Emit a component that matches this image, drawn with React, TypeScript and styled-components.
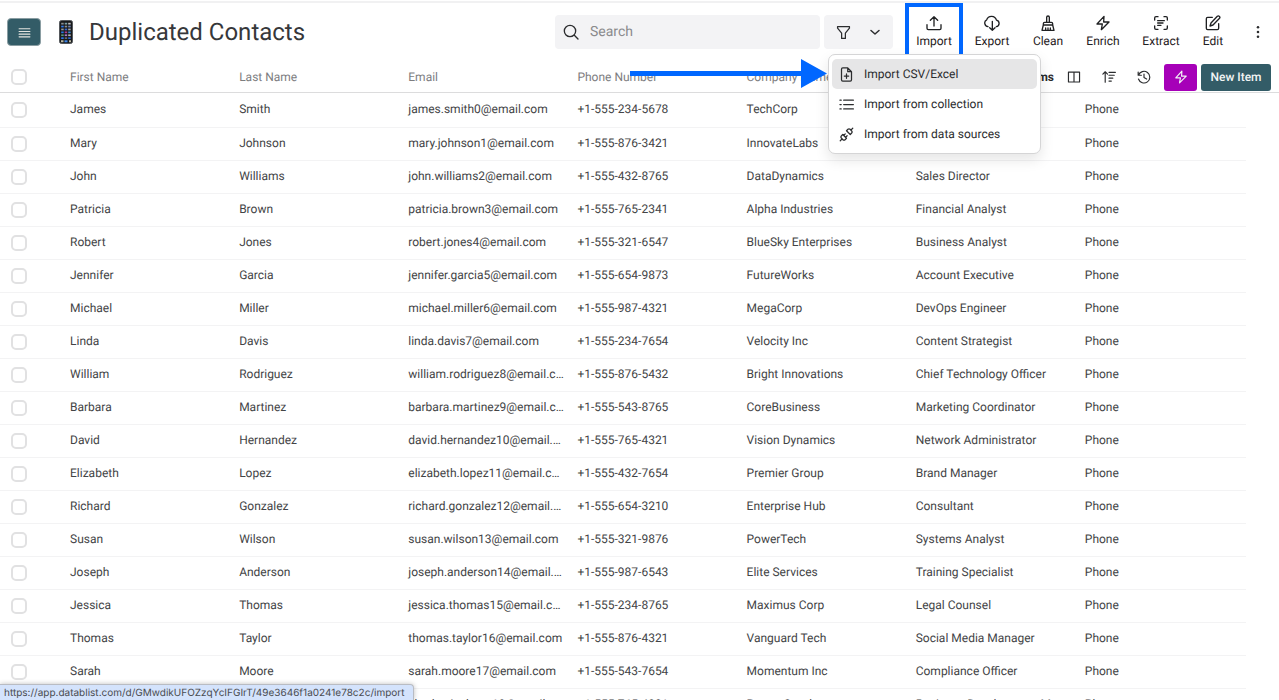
import React from "react";
import styled, { createGlobalStyle, css } from "styled-components";

const GlobalStyle = createGlobalStyle`
  *, *::before, *::after { box-sizing: border-box; }
  body {
    margin: 0;
    background: #fff;
    color: #434446;
    font-family: Roboto, "Liberation Sans", sans-serif;
    font-size: 12px;
    line-height: 16px;
    text-rendering: geometricPrecision;
    overflow: hidden;
  }
  button, input { font: inherit; color: inherit; text-rendering: inherit; }
`;

const Page = styled.div`
  position: relative;
  height: 100vh;
  overflow: hidden;
  padding-top: 1px;
`;

const TopRule = styled.div`
  height: 2px;
  background: #f1f1f2;
`;

const Header = styled.header`
  display: flex;
  align-items: center;
  height: 58px;
  padding: 0 14px 0 7px;
`;

const MenuButton = styled.button`
  display: grid;
  place-items: center;
  width: 34px;
  height: 28px;
  padding: 0;
  border: 1px solid #8a9da2;
  border-radius: 4px;
  background: #335c67;
  color: #e4e4e0;
`;

const TitleIcon = styled.span`
  display: flex;
  margin: 0 16px 0 18px;
`;

const Title = styled.h1`
  margin: 0;
  color: #36373a;
  font-size: 24px;
  line-height: 32px;
  font-weight: 400;
  white-space: nowrap;
`;

const Tools = styled.div`
  display: flex;
  align-items: center;
  margin-left: auto;
`;

const SearchBox = styled.label`
  display: flex;
  align-items: center;
  gap: 11px;
  width: 265px;
  height: 34px;
  padding: 0 8px;
  border-radius: 4px;
  background: #f3f3f5;
  color: #2b2c2e;
`;

const SearchInput = styled.input`
  flex: 1;
  min-width: 0;
  padding: 0;
  border: 0;
  outline: 0;
  background: none;
  font-size: 14px;
  line-height: 20px;
  &::placeholder { color: #8b8b8d; opacity: 1; }
`;

const FilterGroup = styled.div`
  display: flex;
  align-items: center;
  justify-content: space-between;
  width: 69px;
  height: 34px;
  margin-left: 4px;
  padding: 0 12px;
  border-radius: 4px;
  background: #f3f3f5;
`;

const IconButton = styled.button`
  display: grid;
  place-items: center;
  padding: 0;
  border: 0;
  background: none;
  color: #2b2c2e;
`;

const Actions = styled.nav`
  display: flex;
  align-items: center;
  margin-left: 12px;
`;

const Action = styled.button<{ $width: number; $marked?: boolean }>`
  position: relative;
  display: flex;
  flex-direction: column;
  align-items: center;
  justify-content: center;
  gap: 2px;
  width: ${(p) => p.$width}px;
  height: 52px;
  padding: 0;
  border: 0;
  background: none;
  color: #1f2022;
  ${(p) =>
    p.$marked &&
    css`
      &::after {
        content: "";
        position: absolute;
        inset: -3px 0 0;
        border: 4px solid #0067ff;
      }
    `}
`;

const MoreButton = styled(IconButton)`
  margin-left: 16px;
`;

const Grid = styled.main`
  position: relative;
`;

const Table = styled.table`
  width: 100%;
  table-layout: fixed;
  border-collapse: separate;
  border-spacing: 0;
`;

const CheckCol = styled.col`
  width: 62px;
`;

const EndCol = styled.col`
  width: 33px;
`;

const HeadCell = styled.th`
  height: 32px;
  padding: 0 8px;
  border-bottom: 1px solid #dcdcdd;
  color: #7d7d7f;
  font-weight: 400;
  text-align: left;
  white-space: nowrap;
`;

const Cell = styled.td`
  height: 33px;
  padding: 0 4px 2px 8px;
  border-bottom: 1px solid #f3f3f4;
  overflow: hidden;
  text-overflow: ellipsis;
  white-space: nowrap;
`;

const CheckHead = styled(HeadCell)`
  padding: 0 0 0 11px;
`;

const CheckCell = styled(Cell)`
  padding: 0 0 0 11px;
`;

const EndCell = styled.td`
  padding: 0;
`;

const Row = styled.tr`
  &:first-child > td { height: 35px; }
`;

const Check = styled.input`
  display: block;
  appearance: none;
  width: 16px;
  height: 16px;
  margin: 0;
  border: 2px solid #e1e1e2;
  border-radius: 5px;
  background: #fff;
`;

const GridTools = styled.div`
  position: absolute;
  top: 1px;
  right: 8px;
  display: flex;
  align-items: center;
  height: 30px;
  background: #fff;
`;

const Count = styled.strong`
  margin-right: 13px;
  color: #2b2c2e;
  font-weight: 700;
`;

const ToolRow = styled.div`
  display: flex;
  align-items: center;
  gap: 21px;
  margin-right: 9px;
`;

const SolidButton = styled.button<{ $color: string; $width: number }>`
  display: grid;
  place-items: center;
  width: ${(p) => p.$width}px;
  height: 27px;
  margin-left: 4px;
  padding: 0;
  border: 0;
  border-radius: 3px;
  background: ${(p) => p.$color};
  color: #f1f4f4;
  font-weight: 500;
  white-space: nowrap;
`;

const Menu = styled.div`
  position: absolute;
  z-index: 2;
  top: 54px;
  right: 238px;
  width: 213px;
  padding: 4px 3px;
  border: 1px solid #d5d5d6;
  border-radius: 7px;
  background: #fff;
  box-shadow: 0 6px 14px rgba(0, 0, 0, 0.1);
`;

const MenuItem = styled.button<{ $active?: boolean }>`
  display: flex;
  align-items: center;
  gap: 10px;
  width: 100%;
  height: 30px;
  padding: 0 7px;
  border: 0;
  border-radius: 5px;
  background: ${(p) => (p.$active ? "#e6e6e7" : "none")};
  color: #2b2c2e;
`;

const Arrow = styled.svg`
  position: absolute;
  z-index: 3;
  top: 59px;
  right: 452px;
`;

const LinkStatus = styled.a`
  position: absolute;
  z-index: 2;
  left: 0;
  bottom: 0;
  height: 16px;
  padding: 0 8px 0 4px;
  border: 1px solid #b9bcc3;
  border-width: 1px 1px 0 0;
  border-radius: 0 4px 0 0;
  background: #d4e3fc;
  box-shadow: 0 0 5px rgba(0, 0, 0, 0.25);
  color: #4a4c50;
  font-family: Inter, "Liberation Sans", sans-serif;
  font-size: 10px;
  line-height: 17px;
  text-decoration: none;
`;

const glyphs = {
  menu: <path d="M2 5h20M2 10h20M2 15h20M2 20h20" />,
  search: <><circle cx="10.5" cy="10.5" r="8.5" /><path d="m17 17 5.5 5.5" /></>,
  filter: <path d="M2.5 2.5h19V5L15 13v8.500H9V13L2.500 5z" />,
  chevron: <path d="m4 9 8 7 8-7" />,
  upload: <path d="M12 16.5V2.5M6.5 8 12 2.5 17.5 8M1.500 14.500V20q0 2 2 2h17q2 0 2-2v-5.500" />,
  cloud: <path d="M6 17.500A5.500 5.500 0 0 1 4 7.200 7.700 7.700 0 0 1 18.700 7.700 5 5 0 0 1 18.500 17.500M12.500 9.500V23M8.500 19l4 4 4-4" />,
  brush: <path d="M10 11V3.500a2 2 0 0 1 4 0V11M5 15v-2q0-2 2-2h10q2 0 2 2v2M5 15h14l2 8H3zM8.500 23v-3.500M12 23v-3.500M15.500 23v-3.500" />,
  bolt: <path d="M13.500 2 3 13.500h8L9.500 22 21 10.500h-8z" />,
  extract: <path d="M2.500 7.500v-3q0-2 2-2h3M16.500 2.500h3q2 0 2 2v3M21.500 16.500v3q0 2-2 2h-3M7.500 21.500h-3q-2 0-2-2v-3M7 8.500h10M7 12h8M7 15.500h5" />,
  edit: <path d="M11 3.500H4q-2 0-2 2V20q0 2 2 2h14.500q2 0 2-2v-7M18.500 2a2.100 2.100 0 0 1 3 3.300L12 15l-4.500 1.500L9 12z" />,
  more: <g fill="currentColor" stroke="none"><circle cx="12" cy="4" r="2.200" /><circle cx="12" cy="12" r="2.200" /><circle cx="12" cy="20" r="2.200" /></g>,
  columns: <path d="M2.500 3.500h19v17h-19zM12 3.500v17" />,
  sort: <path d="M5.500 21V3M1.500 7l4-4 4 4M12 4h11M12 9h9M12 14h6.500M12 19h4" />,
  history: <path d="M2 3.500V9h5.500M2.500 9A10 10 0 1 1 2.500 15.500M12 7v6l4.500 2.500" />,
  filePlus: <path d="M14 1.500H6q-2 0-2 2v17q0 2 2 2h12q2 0 2-2V7.500zM14 1.500v6h6M12 11v7M8.500 14.500h7" />,
  list: <path d="M7.500 5H23M7.500 12H23M7.500 19H23M1.500 5h2M1.500 12h2M1.500 19h2" />,
  plug: <path d="m19 5 3-3M2 22l3-3M6.300 20.300a2.400 2.400 0 0 0 3.400 0L12 18l-6-6-2.300 2.300a2.400 2.400 0 0 0 0 3.400zM7.500 13.500 10 11M10.500 16.500 13 14M12 6l6 6 2.300-2.300a2.400 2.400 0 0 0 0-3.400l-2.600-2.600a2.400 2.400 0 0 0-3.400 0z" />,
};

type GlyphName = keyof typeof glyphs;

const Icon = ({ name, size = 16, weight = 2 }: { name: GlyphName; size?: number; weight?: number }) => (
  <svg
    width={size}
    height={size}
    viewBox="0 0 24 24"
    fill="none"
    stroke="currentColor"
    strokeWidth={weight}
    strokeLinecap="round"
    strokeLinejoin="round"
    aria-hidden="true"
  >
    {glyphs[name]}
  </svg>
);

const appColors = [
  "#8b8f93", "#7aa0a8", "#c0c0c0",
  "#2f7bf0", "#8c8c8c", "#6f86b8",
  "#9a9a9a", "#3568d8", "#a8a8a8",
  "#2678e8", "#b03a8a", "#3d8bd0",
  "#5a9a7a", "#a77ad0", "#b8b8b8",
  "#2e74f0", "#6a6a6a", "#2b62d0",
];

const PhoneEmoji = () => (
  <svg width="14" height="24" viewBox="0 0 14 24" role="img" aria-label="Mobile phone">
    <rect x="0.5" y="0.5" width="13" height="23" rx="2" fill="#17191c" stroke="#55585c" />
    {appColors.map((color, i) => (
      <rect key={i} x={2.2 + (i % 3) * 3.5} y={2.8 + Math.floor(i / 3) * 2.9} width="2.5" height="1.7" fill={color} />
    ))}
    <path d="M2 21.300h2.500M10 21.300h2" stroke="#b9b9a5" strokeWidth="2" />
    <path d="M5.500 21.300h3" stroke="#3f86e8" strokeWidth="2" />
  </svg>
);

const columns = ["First Name", "Last Name", "Email", "Phone Number", "Company Name", "Job Title", "Source"];

const contacts = [
  ["James", "Smith", "james.smith0@email.com", "+1-555-234-5678", "TechCorp", "Software Engineer"],
  ["Mary", "Johnson", "mary.johnson1@email.com", "+1-555-876-3421", "InnovateLabs", "Product Manager"],
  ["John", "Williams", "john.williams2@email.com", "+1-555-432-8765", "DataDynamics", "Sales Director"],
  ["Patricia", "Brown", "patricia.brown3@email.com", "+1-555-765-2341", "Alpha Industries", "Financial Analyst"],
  ["Robert", "Jones", "robert.jones4@email.com", "+1-555-321-6547", "BlueSky Enterprises", "Business Analyst"],
  ["Jennifer", "Garcia", "jennifer.garcia5@email.com", "+1-555-654-9873", "FutureWorks", "Account Executive"],
  ["Michael", "Miller", "michael.miller6@email.com", "+1-555-987-4321", "MegaCorp", "DevOps Engineer"],
  ["Linda", "Davis", "linda.davis7@email.com", "+1-555-234-7654", "Velocity Inc", "Content Strategist"],
  ["William", "Rodriguez", "william.rodriguez8@email.com", "+1-555-876-5432", "Bright Innovations", "Chief Technology Officer"],
  ["Barbara", "Martinez", "barbara.martinez9@email.com", "+1-555-543-8765", "CoreBusiness", "Marketing Coordinator"],
  ["David", "Hernandez", "david.hernandez10@email.com", "+1-555-765-4321", "Vision Dynamics", "Network Administrator"],
  ["Elizabeth", "Lopez", "elizabeth.lopez11@email.com", "+1-555-432-7654", "Premier Group", "Brand Manager"],
  ["Richard", "Gonzalez", "richard.gonzalez12@email.com", "+1-555-654-3210", "Enterprise Hub", "Consultant"],
  ["Susan", "Wilson", "susan.wilson13@email.com", "+1-555-321-9876", "PowerTech", "Systems Analyst"],
  ["Joseph", "Anderson", "joseph.anderson14@email.com", "+1-555-987-6543", "Elite Services", "Training Specialist"],
  ["Jessica", "Thomas", "jessica.thomas15@email.com", "+1-555-234-8765", "Maximus Corp", "Legal Counsel"],
  ["Thomas", "Taylor", "thomas.taylor16@email.com", "+1-555-876-4321", "Vanguard Tech", "Social Media Manager"],
  ["Sarah", "Moore", "sarah.moore17@email.com", "+1-555-543-7654", "Momentum Inc", "Compliance Officer"],
  ["Charles", "Jackson", "charles.jackson18@email.com", "+1-555-765-4321", "Power Goods", "Business Development Manager"],
];

const actions: { label: string; icon: GlyphName; width: number; marked?: boolean }[] = [
  { label: "Import", icon: "upload", width: 58, marked: true },
  { label: "Export", icon: "cloud", width: 58 },
  { label: "Clean", icon: "brush", width: 54 },
  { label: "Enrich", icon: "bolt", width: 56 },
  { label: "Extract", icon: "extract", width: 60 },
  { label: "Edit", icon: "edit", width: 44 },
];

export default function App() {
  return (
    <Page>
      <GlobalStyle />
      <TopRule />
      <Header>
        <MenuButton aria-label="Open menu"><Icon name="menu" size={13} /></MenuButton>
        <TitleIcon><PhoneEmoji /></TitleIcon>
        <Title>Duplicated Contacts</Title>
        <Tools>
          <SearchBox>
            <Icon name="search" size={16} />
            <SearchInput type="text" placeholder="Search" aria-label="Search" />
          </SearchBox>
          <FilterGroup>
            <IconButton aria-label="Filter"><Icon name="filter" size={15} /></IconButton>
            <IconButton aria-label="Filter options"><Icon name="chevron" size={12} weight={3} /></IconButton>
          </FilterGroup>
          <Actions>
            {actions.map((a) => (
              <Action key={a.label} $width={a.width} $marked={a.marked}>
                <Icon name={a.icon} size={16} />
                {a.label}
              </Action>
            ))}
          </Actions>
          <MoreButton aria-label="More"><Icon name="more" size={14} /></MoreButton>
        </Tools>
      </Header>

      <Grid>
        <Table>
          <colgroup>
            <CheckCol />
            {columns.map((c) => <col key={c} />)}
            <EndCol />
          </colgroup>
          <thead>
            <tr>
              <CheckHead><Check type="checkbox" aria-label="Select all" /></CheckHead>
              {columns.map((c) => <HeadCell key={c}>{c}</HeadCell>)}
              <HeadCell />
            </tr>
          </thead>
          <tbody>
            {contacts.map((c) => (
              <Row key={c[2]}>
                <CheckCell><Check type="checkbox" aria-label={`Select ${c[0]} ${c[1]}`} /></CheckCell>
                {c.map((value) => <Cell key={value}>{value}</Cell>)}
                <Cell>Phone</Cell>
                <EndCell />
              </Row>
            ))}
          </tbody>
        </Table>
        <GridTools>
          <Count>100 items</Count>
          <ToolRow>
            <IconButton aria-label="Columns"><Icon name="columns" size={14} /></IconButton>
            <IconButton aria-label="Sort"><Icon name="sort" size={14} /></IconButton>
            <IconButton aria-label="History"><Icon name="history" size={14} /></IconButton>
          </ToolRow>
          <SolidButton $color="#a600b8" $width={33} aria-label="Run automation"><Icon name="bolt" size={14} /></SolidButton>
          <SolidButton $color="#335c67" $width={70}>New Item</SolidButton>
        </GridTools>
      </Grid>

      <Menu role="menu">
        <MenuItem role="menuitem" $active><Icon name="filePlus" size={15} />Import CSV/Excel</MenuItem>
        <MenuItem role="menuitem"><Icon name="list" size={15} />Import from collection</MenuItem>
        <MenuItem role="menuitem"><Icon name="plug" size={15} />Import from data sources</MenuItem>
      </Menu>

      <Arrow width="197" height="30" viewBox="0 0 197 30" fill="#0067ff" aria-hidden="true">
        <path d="M0 12h171V0l26 14.500L171 29V17H0z" />
      </Arrow>

      <LinkStatus href="https://app.datablist.com/d/GMwdikUFOZzqYcIFGIrT/49e3646f1a0241e78c2c/import">
        https://app.datablist.com/d/GMwdikUFOZzqYcIFGIrT/49e3646f1a0241e78c2c/import
      </LinkStatus>
    </Page>
  );
}
